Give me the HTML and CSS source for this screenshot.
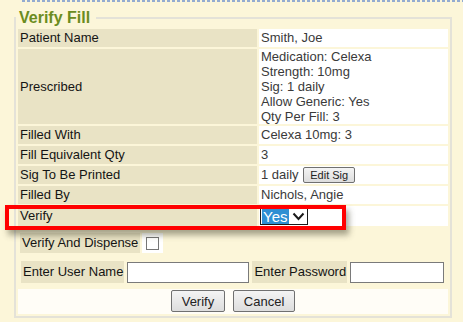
FILE: index.html
```html
<!DOCTYPE html>
<html lang="en">
<head>
  <meta charset="UTF-8">
  <title>Verify Fill</title>
  <link rel="stylesheet" href="styles.css">
</head>
<body>

  <div class="top-rule"></div>

  <fieldset class="verify-fill">
    <legend>Verify Fill</legend>

    <table class="details">
      <col class="label-col">
      <col>
      <tr><td class="label">Patient Name</td><td class="value">Smith, Joe</td></tr>
      <tr>
        <td class="label">Prescribed</td>
        <td class="value lines">
          <div>Medication: Celexa</div>
          <div>Strength: 10mg</div>
          <div>Sig: 1 daily</div>
          <div>Allow Generic: Yes</div>
          <div>Qty Per Fill: 3</div>
        </td>
      </tr>
      <tr><td class="label">Filled With</td><td class="value">Celexa 10mg: 3</td></tr>
      <tr><td class="label">Fill Equivalent Qty</td><td class="value">3</td></tr>
      <tr><td class="label">Sig To Be Printed</td><td class="value">1 daily <button class="btn btn-small">Edit Sig</button></td></tr>
      <tr><td class="label">Filled By</td><td class="value">Nichols, Angie</td></tr>
      <tr class="verify-row">
        <td class="label">Verify</td>
        <td class="value">
          <span class="select">
            <span class="select-text">Yes</span>
            <svg class="chevron" width="13" height="9" viewBox="0 0 13 9"><path d="M1.5 1.5 L6.5 7 L11.5 1.5" fill="none" stroke="#1a1a1a" stroke-width="2"/></svg>
          </span>
        </td>
      </tr>
    </table>

    <table class="dispense">
      <tr>
        <td class="label">Verify And Dispense</td>
        <td class="check-cell"><input type="checkbox" class="check"></td>
      </tr>
    </table>

    <table class="login">
      <tr>
        <td class="label">Enter User Name</td>
        <td><input type="text" class="field field-user"></td>
        <td class="label">Enter Password</td>
        <td><input type="password" class="field field-pass"></td>
      </tr>
    </table>

    <div class="actions">
      <button class="btn">Verify</button>
      <button class="btn btn-cancel">Cancel</button>
    </div>
  </fieldset>

  <div class="highlight"></div>

</body>
</html>
```

FILE: styles.css
```css
body {
  font-family: "Liberation Sans", Arial, sans-serif;
  font-size: 13px;
  background-color: #fcf6d9;
  color: #1a1a1a;
  margin: 0;
  padding: 0;
}
.top-rule {
  height: 2px;
  margin-left: 22px;
  background: repeating-linear-gradient(90deg, #93abd0 0 3px, transparent 3px 5px);
}
.verify-fill {
  margin: 7px 11px 0 14px;
  padding: 0 0 1px 0;
  border: 2px solid #e4e2d8;
  min-width: 0;
}
.verify-fill legend {
  font-size: 16px;
  font-weight: bold;
  line-height: 18px;
  color: #6b8c20;
  padding: 0 6px 0 3px;
}
table {
  border-collapse: separate;
  border-spacing: 2px;
}
.details {
  width: 100%;
  table-layout: fixed;
}
.label-col {
  width: 239px;
}
td {
  padding: 1px 2px;
  line-height: 16px;
  white-space: nowrap;
}
.label {
  background-color: #e9e3c5;
  color: #141414;
}
.value {
  background-color: #ffffff;
  color: #3a3a3a;
}
.value.lines {
  padding: 0 2px;
  line-height: 15px;
}
.btn {
  font-family: "Liberation Sans", Arial, sans-serif;
  font-size: 13px;
  color: #222;
  height: 22px;
  padding: 0 10px;
  border: 1px solid #707070;
  border-radius: 2px;
  background: linear-gradient(#f4f4f4, #dddddd);
}
.btn-small {
  font-size: 11px;
  height: 16px;
  width: 52px;
  padding: 0;
  margin-left: 1px;
  vertical-align: top;
}
.btn-cancel {
  margin-left: 4px;
}
.verify-row .value {
  padding: 1px 1px;
}
.select {
  display: inline-flex;
  align-items: center;
  height: 16px;
  width: 46px;
  border: 1px solid #1a1a1a;
  background-color: #ffffff;
  vertical-align: top;
}
.select-text {
  background-color: #2f8fd3;
  color: #ffffff;
  font-size: 15px;
  line-height: 15px;
  padding: 0 2px 0 1px;
  margin-left: 1px;
}
.chevron {
  margin-left: 3px;
}
.dispense {
  margin: 3px 0 0 2px;
}
.dispense .label {
  padding: 2px 2px 2px 2px;
}
.check-cell {
  background-color: #ffffff;
  padding: 0 3px;
}
.check {
  appearance: none;
  width: 13px;
  height: 13px;
  margin: 2px 1px 0;
  border: 1px solid #767676;
  background: #ffffff;
  vertical-align: top;
}
.login {
  margin: 4px 0 0 3px;
}
.login td {
  padding: 0;
}
.login .label {
  padding: 3px 1px 3px 2px;
}
.field {
  box-sizing: border-box;
  height: 21px;
  margin: 0 1px;
  border: 1px solid #7a7a7a;
  background-color: #ffffff;
  vertical-align: top;
}
.field-user {
  width: 122px;
}
.field-pass {
  width: 94px;
}
.actions {
  margin: 4px 2px 1px;
  padding: 1px 0 2px;
  background-color: #fffdf7;
  text-align: center;
}
.highlight {
  position: absolute;
  left: 5px;
  top: 205px;
  width: 333px;
  height: 17px;
  border: 4px solid #ff0000;
  box-shadow: 3px 5px 6px rgba(60, 60, 40, 0.45);
}
```
